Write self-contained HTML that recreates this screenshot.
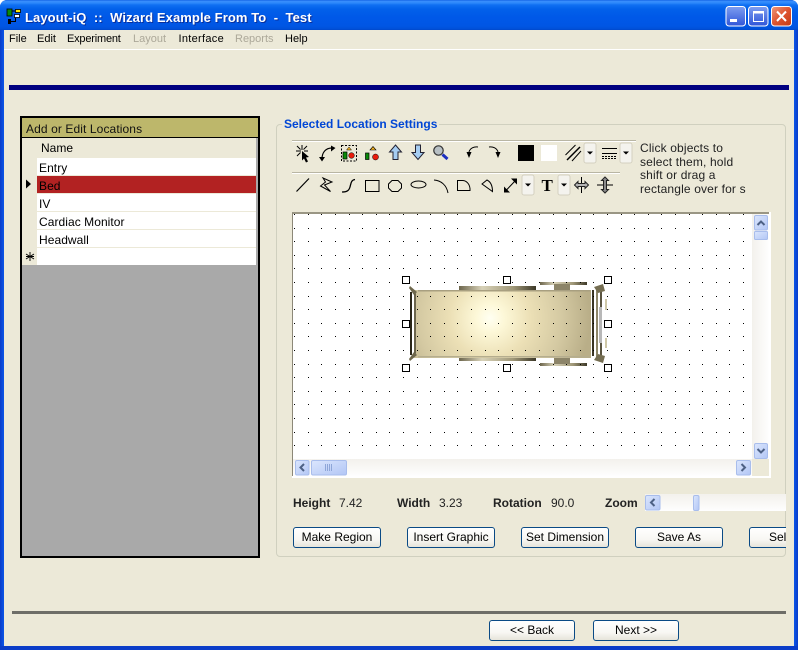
<!DOCTYPE html>
<html><head><meta charset="utf-8"><title>Layout-iQ</title>
<style>
html,body{margin:0;padding:0;background:#fff}
#w{position:relative;width:798px;height:650px;overflow:hidden;font-family:"Liberation Sans",Arial,sans-serif;font-size:11px;color:#000}
#w div{position:absolute;box-sizing:border-box}
.t{white-space:pre;line-height:14px;height:14px}
.m{top:32px}
.g{color:#aca899}
.b{font-weight:bold;color:#222;font-size:12px}
.r{left:37px;width:219px;height:17px;background:#fff;font-size:12px;line-height:20px;padding-left:2px;white-space:pre;letter-spacing:.06px;overflow:hidden}
.btn{border:1px solid #0a4a85;border-radius:3px;background:linear-gradient(#fff,#f8f7f3 60%,#e6e4da);text-align:center;font-size:12px;line-height:19px;height:21px;white-space:pre;overflow:hidden}
</style></head><body>
<div id="w">
<div style="left:0;top:0;width:798px;height:650px;background:#0a3fd0;border-radius:7px 7px 0 0"></div>
<div style="left:0;top:0;width:798px;height:30px;border-radius:7px 7px 0 0;background:linear-gradient(#0a5ae0 0,#3a8efc 1px,#2c88fb 3px,#0f6ff2 5px,#0261ea 9px,#0058e8 18px,#0056e4 26px,#0050d8 29px,#0046c8 30px)"></div>
<div style="left:4px;top:30px;width:790px;height:616px;background:#ece9d8"></div>
<div style="left:794px;top:30px;width:4px;height:620px;background:linear-gradient(90deg,#0b55e8,#0a3cc8)"></div>
<div style="left:0;top:30px;width:4px;height:620px;background:linear-gradient(90deg,#0a3cc8,#0b55e8)"></div>
<div style="left:0;top:646px;width:798px;height:4px;background:#0a3cc8"></div>
<div style="left:4px;top:49px;width:790px;height:1px;background:#fff"></div>
<div style="left:9px;top:85px;width:780px;height:5px;background:#000080"></div>

<div class="t" style="left:25px;top:11px;color:#fff;font-weight:bold;font-size:13px;letter-spacing:.09px;text-shadow:1px 1px 0 #0a2f9a">Layout-iQ  ::  Wizard Example From To  -  Test</div>

<div class="t m" style="left:9px">File</div>
<div class="t m" style="left:37px">Edit</div>
<div class="t m" style="left:67px;letter-spacing:-.2px">Experiment</div>
<div class="t m g" style="left:133px">Layout</div>
<div class="t m" style="left:178.500px;letter-spacing:.3px">Interface</div>
<div class="t m g" style="left:235px">Reports</div>
<div class="t m" style="left:285px">Help</div>

<!-- left list -->
<div style="left:20px;top:116px;width:240px;height:442px;background:#a9a9a9;border:2px solid #000"></div>
<div style="left:22px;top:118px;width:236px;height:20px;background:#bdb76b;border-bottom:1px solid #000"></div>
<div class="t" style="left:26px;top:122px;font-size:12px;color:#111;letter-spacing:.1px">Add or Edit Locations</div>
<div style="left:22px;top:138px;width:234px;height:127px;background:#ece9d8"></div>
<div class="t" style="left:41px;top:141px;font-size:12px">Name</div>
<div class="r" style="top:158px">Entry</div>
<div class="r" style="top:176px;background:#b22222">Bed</div>
<div class="r" style="top:194px">IV</div>
<div class="r" style="top:212px">Cardiac Monitor</div>
<div class="r" style="top:230px">Headwall</div>
<div class="r" style="top:248px"></div>

<!-- group -->
<div style="left:276px;top:124px;width:510px;height:433px;border:1px solid #d0d0bf;border-radius:4px"></div>
<div class="t" style="left:282px;top:117px;padding:0 2px;background:#ece9d8;color:#0046d5;font-weight:bold;font-size:12px">Selected Location Settings</div>
<div class="t" style="left:640px;top:141px;font-size:12px;color:#222;letter-spacing:.15px">Click objects to</div>
<div class="t" style="left:640px;top:155px;font-size:12px;color:#222;letter-spacing:.15px">select them, hold</div>
<div class="t" style="left:640px;top:168px;font-size:12px;color:#222;letter-spacing:.15px">shift or drag a</div>
<div class="t" style="left:640px;top:182px;font-size:12px;color:#222;letter-spacing:.15px">rectangle over for s</div>

<!-- canvas -->
<div style="left:292px;top:212px;width:479px;height:266px;background:#fff;border-left:1px solid #8c8878;border-top:2px solid #9a9684"></div>
<div style="left:752px;top:214px;width:17px;height:246px;background:linear-gradient(90deg,#f3f1ec,#fefefe)"></div>
<div style="left:293px;top:459px;width:459px;height:17px;background:linear-gradient(#f3f1ec,#fefefe)"></div>
<div style="left:752px;top:459px;width:17px;height:17px;background:#ece9d8"></div>
<div style="left:292px;top:476px;width:479px;height:2px;background:#fff"></div>
<div style="left:769px;top:212px;width:2px;height:266px;background:#fff"></div>
<div style="left:645px;top:494px;width:141px;height:17px;background:linear-gradient(#f3f1ec,#fefefe)"></div>

<svg style="position:absolute;left:0;top:0" width="798" height="650" viewBox="0 0 798 650" shape-rendering="geometricPrecision">
<defs>
<radialGradient id="bed" gradientUnits="userSpaceOnUse" cx="490" cy="318" r="100">
<stop offset="0" stop-color="#fffff2"/><stop offset=".14" stop-color="#fdf8d8"/><stop offset=".4" stop-color="#ece0b6"/><stop offset=".72" stop-color="#d4c9a2"/><stop offset="1" stop-color="#b9ae88"/></radialGradient>
<linearGradient id="sb" x1="0" y1="0" x2="1" y2="1"><stop offset="0" stop-color="#dbe6fd"/><stop offset="1" stop-color="#b2c6f5"/></linearGradient>
<linearGradient id="rail" x1="0" x2="1"><stop offset="0" stop-color="#6d664d"/><stop offset=".3" stop-color="#d8d2b8"/><stop offset=".7" stop-color="#a09878"/><stop offset="1" stop-color="#3c3828"/></linearGradient>
<linearGradient id="ttl" x1="0" x2="0" y1="0" y2="1"><stop offset="0" stop-color="#7e9ef0"/><stop offset="1" stop-color="#2f55d8"/></linearGradient>
<linearGradient id="cl" x1="0" x2="1" y1="0" y2="1"><stop offset="0" stop-color="#ee9a7c"/><stop offset=".5" stop-color="#de5430"/><stop offset="1" stop-color="#c43a14"/></linearGradient>
<path id="dr" d="M294 0h1v1h-1zM308 0h1v1h-1zM321 0h1v1h-1zM335 0h1v1h-1zM349 0h1v1h-1zM362 0h1v1h-1zM376 0h1v1h-1zM389 0h1v1h-1zM403 0h1v1h-1zM417 0h1v1h-1zM430 0h1v1h-1zM444 0h1v1h-1zM457 0h1v1h-1zM471 0h1v1h-1zM485 0h1v1h-1zM498 0h1v1h-1zM512 0h1v1h-1zM525 0h1v1h-1zM539 0h1v1h-1zM553 0h1v1h-1zM566 0h1v1h-1zM580 0h1v1h-1zM593 0h1v1h-1zM607 0h1v1h-1zM621 0h1v1h-1zM634 0h1v1h-1zM648 0h1v1h-1zM661 0h1v1h-1zM675 0h1v1h-1zM689 0h1v1h-1zM702 0h1v1h-1zM716 0h1v1h-1zM729 0h1v1h-1zM743 0h1v1h-1z"/>
</defs>

<!-- app icon -->
<rect x="7" y="9" width="5" height="7" fill="#0a8a0a" stroke="#000" stroke-width=".8"/>
<rect x="15.500" y="9.500" width="5" height="3" fill="#ffe800" stroke="#000" stroke-width=".8"/>
<rect x="14.500" y="14.500" width="5" height="3" fill="#fff" stroke="#000" stroke-width=".8"/>
<rect x="8" y="19" width="3" height="5" fill="#000"/>
<path d="M12 11h3M11 21.500h5M15.500 18v4" stroke="#000" fill="none"/>

<!-- window buttons -->
<rect x="726" y="6.500" width="19.500" height="19.500" rx="3" fill="url(#ttl)" stroke="#fff"/>
<rect x="730" y="19" width="7" height="3" fill="#fff"/>
<rect x="748.500" y="6.500" width="19.500" height="19.500" rx="3" fill="url(#ttl)" stroke="#fff"/>
<path d="M753.500 12.500h10v9h-10z" fill="none" stroke="#fff"/><rect x="753" y="11" width="11" height="2.500" fill="#fff"/>
<rect x="771.500" y="6.500" width="20" height="19.500" rx="3" fill="url(#cl)" stroke="#fff"/>
<path d="M777 11.500l9 9.500M786 11.500l-9 9.500" stroke="#fff" stroke-width="2" fill="none"/>

<!-- row markers -->
<path d="M26 179.500l5 4.500-5 4.500z" fill="#000"/>
<path d="M30 252v9M26 254l8 5M34 254l-8 5M26 256.500h8" stroke="#000" stroke-width=".9" fill="none"/>
<rect x="256" y="138" width="2" height="127" fill="#a9a9a9"/>
<g fill="#ece9d8"><rect x="37" y="175" width="219" height="1"/><rect x="37" y="193" width="219" height="1"/><rect x="37" y="211" width="219" height="1"/><rect x="37" y="229" width="219" height="1"/><rect x="37" y="247" width="219" height="1"/></g>

<!-- toolbar rules -->
<rect x="292" y="140" width="344" height="1" fill="#b9b6a4"/><rect x="292" y="141" width="344" height="1" fill="#fff"/>
<rect x="292" y="172" width="328" height="1" fill="#b9b6a4"/><rect x="292" y="173" width="328" height="1" fill="#fff"/>

<!-- toolbar row 1 -->
<g fill="none" stroke="#000">
<path d="M302 145v5M296 151h5M297 146l3.500 3.500M307 146l-3.500 3.500M297 156l3.500-3.500M304 151h4" stroke-width="1"/>
<path d="M302 151l7 6-3 .5 2 4-2 1-2-4-2 2z" fill="#000" stroke="none"/>
<path d="M322 159c0-7 4-11 10-11" stroke-width="1.200"/>
<path d="M331 145.500l4.500 2.500-4.500 3.500zM319 157l6 0-3 4.500z" fill="#000" stroke="none"/>
<rect x="341.500" y="145.500" width="15" height="15.500" stroke-dasharray="2 1.500"/>
<rect x="343" y="152" width="4" height="7" fill="#0a8a0a" stroke="#000" stroke-width=".7"/>
<circle cx="351.500" cy="155.500" r="2.800" fill="#e81c0c" stroke="#000" stroke-width=".5"/>
<path d="M346.500 150l2.500-3 2.500 3z" fill="#f0b020" stroke="#000" stroke-width=".5"/>
<rect x="365.500" y="153" width="3.500" height="6.500" fill="#0a8a0a" stroke="#000" stroke-width=".7"/>
<circle cx="375.500" cy="157" r="3" fill="#e81c0c" stroke="#000" stroke-width=".5"/>
<path d="M370 150l3-3.500 3 3.500z" fill="#f0b020" stroke="#000" stroke-width=".6"/>
<path d="M395.500 145l6 7h-3.500v7.500h-5v-7.500h-3.500z" fill="#a6cdf2" stroke="#223" stroke-width="1"/>
<path d="M415.500 145h5v7.500h3.500l-6 7-6-7h3.500z" fill="#a6cdf2" stroke="#223" stroke-width="1"/>
<circle cx="438.500" cy="150.500" r="4.700" fill="#b8c0c4" stroke="#333" stroke-width="1.200"/>
<path d="M442.500 154.500l5 4.500" stroke="#1c2fc0" stroke-width="3"/>
<path d="M478 147c-4-.5-8 1-9 5" stroke-width="1"/>
<path d="M466.500 152l5 0-2.500 6z" fill="#000" stroke="none"/>
<path d="M489 147c4-.5 8 1 9 5" stroke-width="1"/>
<path d="M500.500 152l-5 0 2.500 6z" fill="#000" stroke="none"/>
</g>
<rect x="518" y="145" width="16" height="16" fill="#000"/>
<rect x="541" y="145" width="16" height="16" fill="#fff"/>
<path d="M565.500 155l10-10M572 161l9-10" stroke="#000" fill="none"/><path d="M567 160l13-13" stroke="#000" stroke-width="1.500"/>
<g stroke="#000" fill="none"><path d="M602 148.500h15M602 153.500h15"/><path d="M602 156.500h15M602 158.500h15" stroke-dasharray="2 1"/></g>

<!-- dropdowns -->
<g>
<rect x="584" y="143" width="12" height="20" rx="2" fill="#f4f3ee" stroke="#d4d0c0"/><path d="M587 151.500h6l-3 3z" fill="#000"/>
<rect x="620" y="143" width="12" height="20" rx="2" fill="#f4f3ee" stroke="#d4d0c0"/><path d="M623 151.500h6l-3 3z" fill="#000"/>
<rect x="522" y="175" width="12" height="20" rx="2" fill="#f4f3ee" stroke="#d4d0c0"/><path d="M525 183.500h6l-3 3z" fill="#000"/>
<rect x="558" y="175" width="12" height="20" rx="2" fill="#f4f3ee" stroke="#d4d0c0"/><path d="M561 183.500h6l-3 3z" fill="#000"/>
</g>

<!-- toolbar row 2 -->
<g fill="none" stroke="#000" stroke-width="1">
<path d="M296.500 191.500l12.500-13" stroke-width="1.200"/>
<path d="M323 178l9 4-7.500 3 6 6.500-10-5.500 5-4z"/>
<path d="M342 192c5 0 7-1.500 8-5s1-7 5-7.500" stroke-width="1.300"/>
<rect x="365.500" y="180.500" width="13.500" height="11"/>
<path d="M392 180.500h6l3.500 3.500v4l-3.500 3.500h-6l-3.500-3.500v-4z"/>
<ellipse cx="418.500" cy="184.500" rx="7.500" ry="3.500"/>
<path d="M434 180c7 .5 12.500 5 14 13"/>
<path d="M457.500 180.500h5c4 0 7 3.500 7.500 8v2h-12.500z"/>
<path d="M482 184l5-4c3 1.500 5.500 4.500 5.500 11.500z"/>
<path d="M506 190.500l9.500-10" stroke-width="1"/>
<path d="M504 186.500v6h6zM517 184.500v-6h-6z" fill="#000" stroke="none"/>
<path d="M581.500 177v16"/><path d="M574.500 185l3.500-3.500v2h7v-2l3.500 3.500-3.500 3.500v-2h-7v2z" fill="#b5b5b5" stroke="#222"/>
<path d="M597 185h16"/><path d="M605 177l3.500 3.500h-2v9h2l-3.500 3.500-3.500-3.500h2v-9h-2z" fill="#8a8a8a" stroke="#222"/>
</g>
<text x="541.500" y="191" font-family="Liberation Serif,serif" font-weight="bold" font-size="17" fill="#000">T</text>

<!-- bed -->
<rect x="459" y="286" width="77" height="4" fill="url(#rail)"/>
<rect x="459" y="357" width="77" height="4" fill="url(#rail)"/>
<rect x="540" y="282" width="47" height="3" fill="url(#rail)"/>
<rect x="540" y="363" width="47" height="3" fill="url(#rail)"/>
<rect x="554" y="284" width="16" height="7" fill="#8c8468"/><rect x="554" y="357" width="16" height="7" fill="#8c8468"/>
<rect x="414" y="290" width="177" height="68" fill="url(#bed)"/>
<rect x="418" y="290" width="172" height="1.500" fill="#a89f80"/><rect x="418" y="356" width="172" height="1.500" fill="#b5ad8e"/>
<path d="M411 292v63" stroke="#2a2618" stroke-width="2"/><path d="M415 292v64" stroke="#4a4530" stroke-width="1.500"/>
<path d="M410 286l7 6-3 3-5-7zM410 361l7-6-3-3-5 7z" fill="#6e674c"/>
<path d="M593 290v66" stroke="#3a3524" stroke-width="2"/><path d="M597 288v71" stroke="#8e8668" stroke-width="2"/><path d="M601 290v66" stroke="#5a5440" stroke-width="2"/>
<path d="M594 287l9-3 2 7-7 2zM594 360l9 3 2-7-7-2z" fill="#756e52"/>
<path d="M599 307h3v36h-3z" fill="#b8b8b8"/><path d="M606 299v11M606 338v10" stroke="#cfc8a8" stroke-width="2"/>

<!-- dots -->
<g fill="#000">
<use href="#dr" y="214"/><use href="#dr" y="228"/><use href="#dr" y="241"/><use href="#dr" y="255"/><use href="#dr" y="268"/><use href="#dr" y="282"/><use href="#dr" y="296"/><use href="#dr" y="309"/><use href="#dr" y="323"/><use href="#dr" y="336"/><use href="#dr" y="350"/><use href="#dr" y="364"/><use href="#dr" y="377"/><use href="#dr" y="391"/><use href="#dr" y="404"/><use href="#dr" y="418"/><use href="#dr" y="432"/><use href="#dr" y="445"/>
</g>

<!-- handles -->
<g fill="#fff" stroke="#000">
<rect x="402.500" y="276.500" width="7" height="7"/><rect x="503.500" y="276.500" width="7" height="7"/><rect x="604.500" y="276.500" width="7" height="7"/>
<rect x="402.500" y="320.500" width="7" height="7"/><rect x="604.500" y="320.500" width="7" height="7"/>
<rect x="402.500" y="364.500" width="7" height="7"/><rect x="503.500" y="364.500" width="7" height="7"/><rect x="604.500" y="364.500" width="7" height="7"/>
</g>

<!-- scrollbars -->
<g stroke="#a8bdec" fill="url(#sb)">
<rect x="754.500" y="215.500" width="13" height="14.500" rx="1.500"/>
<rect x="754.500" y="231.500" width="13" height="8" rx="1"/>
<rect x="754.500" y="443.500" width="13" height="15" rx="1.500"/>
<rect x="295.500" y="460.500" width="13.500" height="14.500" rx="1.500"/>
<rect x="311.500" y="460.500" width="35" height="14.500" rx="1.500"/>
<rect x="736.500" y="460.500" width="14" height="14.500" rx="1.500"/>
<rect x="645.500" y="495.500" width="14.500" height="14.500" rx="1.500"/>
<rect x="693.500" y="495.500" width="5.500" height="15" rx="1.500"/>
</g>
<g fill="none" stroke="#4d6185" stroke-width="2">
<path d="M757.500 225l3.500-3.500 3.500 3.500"/>
<path d="M757.500 449l3.500 3.500 3.500-3.500"/>
<path d="M304 464l-3.500 3.500 3.500 3.500"/>
<path d="M741.500 464l3.500 3.500-3.500 3.500"/>
<path d="M654.500 499l-3.500 3.500 3.500 3.500"/>
</g>
<path d="M325.500 464v7M327.500 464v7M329.500 464v7M331.500 464v7" stroke="#8ea6d8" fill="none"/>

<!-- bottom rule -->
<rect x="12" y="611" width="774" height="3" fill="#6e6e68"/>
</svg>

<div class="t b" style="left:293px;top:496px">Height</div>
<div class="t" style="left:339px;top:496px;font-size:12px;color:#222">7.42</div>
<div class="t b" style="left:397px;top:496px">Width</div>
<div class="t" style="left:439px;top:496px;font-size:12px;color:#222">3.23</div>
<div class="t b" style="left:493px;top:496px">Rotation</div>
<div class="t" style="left:551px;top:496px;font-size:12px;color:#222">90.0</div>
<div class="t b" style="left:605px;top:496px">Zoom</div>

<div class="btn" style="left:293px;top:527px;width:88px">Make Region</div>
<div class="btn" style="left:407px;top:527px;width:88px">Insert Graphic</div>
<div class="btn" style="left:521px;top:527px;width:88px">Set Dimension</div>
<div class="btn" style="left:635px;top:527px;width:88px">Save As</div>
<div style="left:749px;top:527px;width:37px;height:21px;overflow:hidden"><div class="btn" style="left:0;top:0;width:88px;text-align:left;padding-left:19px">Select</div></div>

<div class="btn" style="left:489px;top:620px;width:86px">&lt;&lt; Back</div>
<div class="btn" style="left:593px;top:620px;width:86px">Next &gt;&gt;</div>
</div>
</body></html>
